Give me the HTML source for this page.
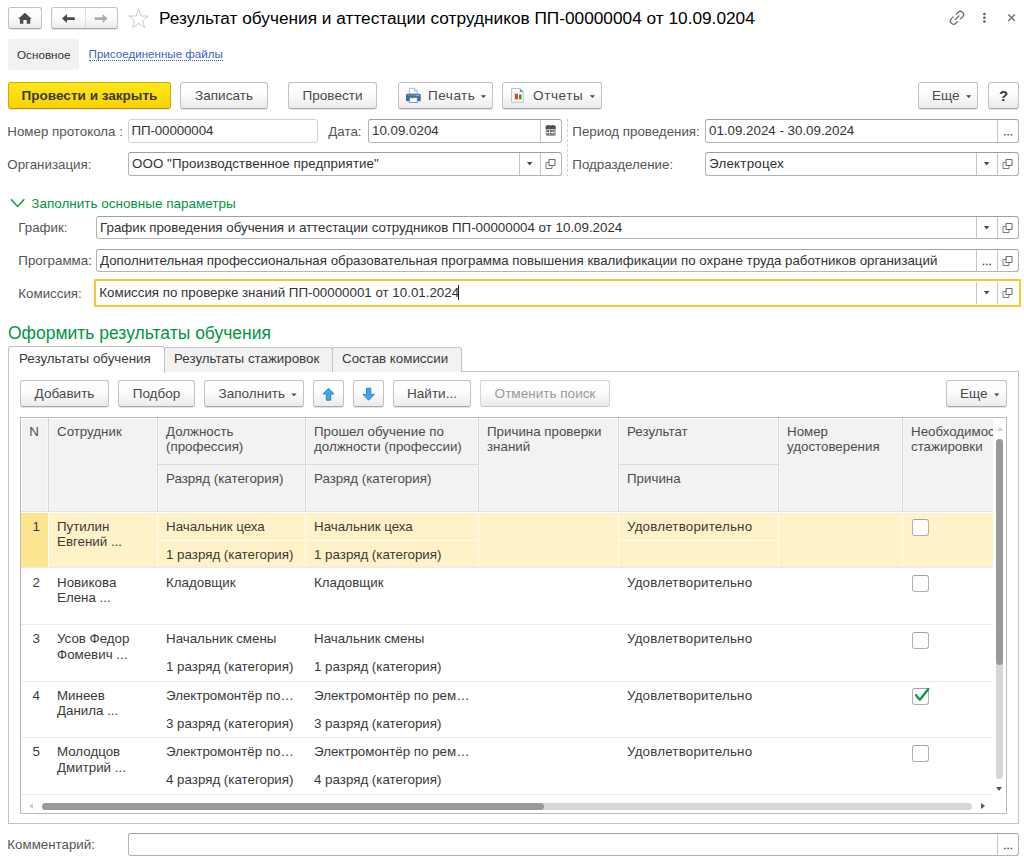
<!DOCTYPE html>
<html lang="ru">
<head>
<meta charset="utf-8">
<title>Результат обучения и аттестации сотрудников</title>
<style>
*{box-sizing:border-box}
html,body{margin:0;padding:0}
body{width:1024px;height:861px;overflow:hidden;background:#fff;position:relative;
 font-family:"Liberation Sans",sans-serif;font-size:13.333px;color:#333;line-height:15px}
.a{position:absolute;white-space:nowrap}
.btn{position:absolute;height:27px;top:82px;border:1px solid #c2c2c2;border-bottom-color:#a8a8a8;border-radius:3px;
 background:linear-gradient(#ffffff 0%,#fdfdfd 40%,#ebebeb 100%);box-shadow:0 1px 0 rgba(0,0,0,.10);
 text-align:center;line-height:25px;font-size:13.55px;color:#4a4a4a;white-space:nowrap}
.btn.y{background:linear-gradient(#ffe71f,#f8d200);border-color:#cfae00;border-bottom-color:#b79700;font-weight:bold;color:#3a3a3a}
.btn.dis{color:#9a9a9a;border-color:#d4d4d4;border-bottom-color:#c4c4c4;box-shadow:none}
.inp{position:absolute;height:23px;border:1px solid #b4b4b4;border-top-color:#9f9f9f;border-radius:3px;background:#fff;
 line-height:21px;padding-left:3px;color:#333;white-space:nowrap;overflow:hidden}
.lbl{position:absolute;margin:-0.5px 0 0 -0.7px;color:#555;white-space:nowrap;line-height:15px}
.sep{position:absolute;top:0;bottom:0;width:1px;background:#c8c8c8}
.green{color:#009646}
.tab{background:#f2f2f2;border:1px solid #c3c3c3;border-bottom:none;border-radius:3px 3px 0 0;padding:3px 0 0 9px;color:#3a3a3a}
.tab.act{background:#fff;padding:4px 0 0 10px}
.vl{width:1px;background:#d4d4d4;box-shadow:-1px 0 0 #f9f9f9,1px 0 0 #f9f9f9}
.hl{height:1px;background:#dcdcdc}
.th{color:#4d4d4d;line-height:15.2px}
.td{color:#3a3a3a;line-height:15.4px}
.cb{width:17px;height:17px;border:1px solid #b0b0b0;border-top-color:#a0a0a0;border-radius:3px;background:#fff}
.tri{position:absolute;width:0;height:0;border-left:3px solid transparent;border-right:3px solid transparent;border-top:4px solid #444}
</style>
</head>
<body>

<!-- top navigation -->
<div class="btn" style="left:8px;top:7px;width:34px;height:22px"></div>
<div class="btn" style="left:51px;top:7px;width:67px;height:22px"></div>
<div class="a" style="left:159px;top:7px;font-size:17.25px;line-height:22px;color:#000">Результат обучения и аттестации сотрудников ПП-00000004 от 10.09.0204</div>

<!-- sub tabs -->
<div class="a" style="left:8px;top:39px;width:71px;height:31px;background:#f2f2f2;border-radius:3px"></div>
<div class="a" style="left:17px;top:47px;font-size:11.7px;color:#333">Основное</div>
<div class="a" style="left:88.6px;top:47px;font-size:11.6px;color:#3a5fc8;border-bottom:1px dotted #3a5fc8;line-height:13px">Присоединенные файлы</div>

<!-- command bar -->
<div class="btn y" style="left:8px;width:163px">Провести и закрыть</div>
<div class="btn" style="left:180px;width:88px">Записать</div>
<div class="btn" style="left:288px;width:89px">Провести</div>
<div class="btn" style="left:398px;width:95px"><span class="a" style="left:29px;top:0;letter-spacing:0.5px">Печать</span></div>
<div class="btn" style="left:502px;width:100px"><span class="a" style="left:30px;top:0;letter-spacing:0.6px">Отчеты</span></div>
<div class="btn" style="left:918px;width:60px"><span class="a" style="left:13px;top:0">Еще</span></div>
<div class="btn" style="left:988px;width:31px;font-weight:bold;font-size:15px;color:#3a3a3a">?</div>

<!-- header fields -->
<div class="lbl" style="left:8px;top:124px">Номер протокола :</div>
<div class="inp" style="left:128px;top:119px;width:190px;height:24px;line-height:22px;border-color:#d2d2d2;letter-spacing:-0.1px;padding-left:2.5px">ПП-00000004</div>
<div class="lbl" style="left:329px;top:124px">Дата:</div>
<div class="inp" style="left:368px;top:119px;width:194px;height:24px;line-height:22px">10.09.0204</div>
<div class="lbl" style="left:573px;top:124px">Период проведения:</div>
<div class="inp" style="left:705px;top:119px;width:314px;height:24px;line-height:22px">01.09.2024 - 30.09.2024</div>

<div class="lbl" style="left:8px;top:157px">Организация:</div>
<div class="inp" style="left:128px;top:152px;width:434px;height:24px;line-height:22px;letter-spacing:0.08px">ООО "Производственное предприятие"</div>
<div class="lbl" style="left:573px;top:157px">Подразделение:</div>
<div class="inp" style="left:705px;top:152px;width:314px;height:24px;line-height:22px;letter-spacing:0.25px">Электроцех</div>

<!-- group -->
<div class="lbl green" style="left:32px;top:196.5px;font-size:13.5px">Заполнить основные параметры</div>
<div class="lbl" style="left:19px;top:220px">График:</div>
<div class="inp" style="left:96px;top:216px;width:923px">График проведения обучения и аттестации сотрудников ПП-00000004 от 10.09.2024</div>
<div class="lbl" style="left:19px;top:253px">Программа:</div>
<div class="inp" style="left:96px;top:249px;width:923px">Дополнительная профессиональная образовательная программа повышения квалификации по охране труда работников организаций</div>
<div class="lbl" style="left:19px;top:286px">Комиссия:</div>
<div class="inp" style="left:94px;top:279px;width:927px;height:28px;border:2px solid #fbc62f;border-radius:1px;line-height:24px;padding-left:3.3px">Комиссия по проверке знаний ПП-00000001 от 10.01.2024</div>

<div class="a green" style="left:8px;top:323px;font-size:17.5px;line-height:20px">Оформить результаты обучения</div>

<!-- tabs + panel -->
<div class="a" style="left:8px;top:371px;width:1011px;height:453px;border:1px solid #c3c3c3;background:#fff"></div>
<div class="a tab" style="left:164px;top:347px;width:169px;height:25px">Результаты стажировок</div>
<div class="a tab" style="left:332px;top:347px;width:130px;height:25px">Состав комиссии</div>
<div class="a tab act" style="left:8px;top:346px;width:157px;height:27px">Результаты обучения</div>

<!-- table command bar -->
<div class="btn" style="left:20px;top:380px;width:89px;line-height:26px">Добавить</div>
<div class="btn" style="left:118px;top:380px;width:77px;line-height:26px">Подбор</div>
<div class="btn" style="left:204px;top:380px;width:100px;line-height:26px"><span class="a" style="left:13.5px;top:0">Заполнить</span></div>
<div class="btn" style="left:313px;top:380px;width:31px;line-height:26px"></div>
<div class="btn" style="left:353px;top:380px;width:31px;line-height:26px"></div>
<div class="btn" style="left:393px;top:380px;width:78px;line-height:26px">Найти...</div>
<div class="btn dis" style="left:480px;top:380px;width:130px;line-height:26px">Отменить поиск</div>
<div class="btn" style="left:946px;top:380px;width:61px;line-height:26px"><span class="a" style="left:13px;top:0">Еще</span></div>

<!-- table -->
<div id="tbl" class="a" style="left:20px;top:417px;width:987px;height:397px;border:1px solid #b9b9b9;background:#fff;overflow:hidden">
<div class="a" style="left:-21px;top:-418px;width:1024px;height:861px">
<div class="a" style="left:22px;top:419px;width:971px;height:92px;background:#f2f2f2"></div>
<div class="a" style="left:21px;top:511px;width:972px;height:1px;background:#e2e2e2"></div>
<div class="a vl" style="left:48px;top:418px;height:93px"></div>
<div class="a vl" style="left:157px;top:418px;height:93px"></div>
<div class="a vl" style="left:305px;top:418px;height:93px"></div>
<div class="a vl" style="left:478px;top:418px;height:93px"></div>
<div class="a vl" style="left:618px;top:418px;height:93px"></div>
<div class="a vl" style="left:778px;top:418px;height:93px"></div>
<div class="a vl" style="left:902px;top:418px;height:93px"></div>
<div class="a hl" style="left:158px;top:464px;width:320px"></div>
<div class="a hl" style="left:619px;top:464px;width:159px"></div>
<div class="a th" style="left:29.2px;top:424px">N</div>
<div class="a th" style="left:57px;top:424px">Сотрудник</div>
<div class="a th" style="left:166px;top:424px">Должность<br>(профессия)</div>
<div class="a th" style="left:166px;top:471px">Разряд (категория)</div>
<div class="a th" style="left:314px;top:424px">Прошел обучение по<br>должности (профессии)</div>
<div class="a th" style="left:314px;top:471px">Разряд (категория)</div>
<div class="a th" style="left:487px;top:424px">Причина проверки<br>знаний</div>
<div class="a th" style="left:627px;top:424px">Результат</div>
<div class="a th" style="left:627px;top:471px">Причина</div>
<div class="a th" style="left:787px;top:424px">Номер<br>удостоверения</div>
<div class="a th" style="left:911px;top:424px;width:82px;overflow:hidden">Необходимость<br>стажировки</div>
<div class="a" style="left:21px;top:513px;width:27px;height:54px;background:#fde48e"></div>
<div class="a" style="left:49px;top:513px;width:944px;height:54px;background:#fff2c8"></div>
<div class="a" style="left:157px;top:513px;width:1px;height:54px;background:#fffbee"></div>
<div class="a" style="left:305px;top:513px;width:1px;height:54px;background:#fffbee"></div>
<div class="a" style="left:478px;top:513px;width:1px;height:54px;background:#fffbee"></div>
<div class="a" style="left:618px;top:513px;width:1px;height:54px;background:#fffbee"></div>
<div class="a" style="left:778px;top:513px;width:1px;height:54px;background:#fffbee"></div>
<div class="a" style="left:902px;top:513px;width:1px;height:54px;background:#fffbee"></div>
<div class="a" style="left:158px;top:540px;width:320px;height:1px;background:#fffbee"></div>
<div class="a" style="left:619px;top:540px;width:159px;height:1px;background:#fffbee"></div>
<div class="a" style="left:21px;top:567px;width:972px;height:1px;background:#ebebeb"></div>
<div class="a" style="left:21px;top:624px;width:972px;height:1px;background:#ebebeb"></div>
<div class="a" style="left:21px;top:681px;width:972px;height:1px;background:#ebebeb"></div>
<div class="a" style="left:21px;top:737px;width:972px;height:1px;background:#ebebeb"></div>
<div class="a" style="left:21px;top:794px;width:972px;height:1px;background:#ebebeb"></div>
<div class="a td" style="left:32.6px;top:518.8px">1</div>
<div class="a td" style="left:57px;top:518.8px">Путилин<br>Евгений ...</div>
<div class="a td" style="left:166px;top:518.8px">Начальник цеха</div>
<div class="a td" style="left:166px;top:546.9px">1 разряд (категория)</div>
<div class="a td" style="left:314px;top:518.8px">Начальник цеха</div>
<div class="a td" style="left:314px;top:546.9px">1 разряд (категория)</div>
<div class="a td" style="left:627px;top:518.8px;letter-spacing:0.2px">Удовлетворительно</div>
<div class="a cb" style="left:912px;top:519px"></div>
<div class="a td" style="left:32.6px;top:574.8px">2</div>
<div class="a td" style="left:57px;top:574.8px">Новикова<br>Елена ...</div>
<div class="a td" style="left:166px;top:574.8px">Кладовщик</div>
<div class="a td" style="left:314px;top:574.8px">Кладовщик</div>
<div class="a td" style="left:627px;top:574.8px;letter-spacing:0.2px">Удовлетворительно</div>
<div class="a cb" style="left:912px;top:575px"></div>
<div class="a td" style="left:32.6px;top:631.3px">3</div>
<div class="a td" style="left:57px;top:631.3px">Усов Федор<br>Фомевич ...</div>
<div class="a td" style="left:166px;top:631.3px">Начальник смены</div>
<div class="a td" style="left:166px;top:659.4px">1 разряд (категория)</div>
<div class="a td" style="left:314px;top:631.3px">Начальник смены</div>
<div class="a td" style="left:314px;top:659.4px">1 разряд (категория)</div>
<div class="a td" style="left:627px;top:631.3px;letter-spacing:0.2px">Удовлетворительно</div>
<div class="a cb" style="left:912px;top:631.5px"></div>
<div class="a td" style="left:32.6px;top:687.8px">4</div>
<div class="a td" style="left:57px;top:687.8px">Минеев<br>Данила ...</div>
<div class="a td" style="left:166px;top:687.8px">Электромонтёр по…</div>
<div class="a td" style="left:166px;top:715.9px">3 разряд (категория)</div>
<div class="a td" style="left:314px;top:687.8px">Электромонтёр по рем…</div>
<div class="a td" style="left:314px;top:715.9px">3 разряд (категория)</div>
<div class="a td" style="left:627px;top:687.8px;letter-spacing:0.2px">Удовлетворительно</div>
<div class="a cb" style="left:912px;top:688px"><svg width="22" height="22" viewBox="0 0 22 22" style="position:absolute;left:-1px;top:-4px"><path d="M4.0 10.2 L7.9 14.7 L16.3 3.9" fill="none" stroke="#0b9a48" stroke-width="2.4" stroke-linecap="round" stroke-linejoin="round"/></svg></div>
<div class="a td" style="left:32.6px;top:744.3px">5</div>
<div class="a td" style="left:57px;top:744.3px">Молодцов<br>Дмитрий ...</div>
<div class="a td" style="left:166px;top:744.3px">Электромонтёр по…</div>
<div class="a td" style="left:166px;top:772.4px">4 разряд (категория)</div>
<div class="a td" style="left:314px;top:744.3px">Электромонтёр по рем…</div>
<div class="a td" style="left:314px;top:772.4px">4 разряд (категория)</div>
<div class="a td" style="left:627px;top:744.3px;letter-spacing:0.2px">Удовлетворительно</div>
<div class="a cb" style="left:912px;top:744.5px"></div>
<div class="a" style="left:993px;top:418px;width:13px;height:395px;background:#fff"></div>
<div class="a" style="left:996px;top:439px;width:7px;height:340px;border-radius:4px;background:#d6d6d6"></div>
<div class="a" style="left:996px;top:439px;width:7px;height:226px;border-radius:4px;background:#999"></div>
<div class="a" style="left:996.5px;top:427px;border-left:3px solid transparent;border-right:3px solid transparent;border-bottom:4px solid #d0d0d0;width:0;height:0"></div>
<div class="a" style="left:996px;top:787px;border-left:3.5px solid transparent;border-right:3.5px solid transparent;border-top:4px solid #555;width:0;height:0"></div>
<div class="a" style="left:21px;top:795px;width:985px;height:18px;background:#fff"></div>
<div class="a" style="left:42px;top:803px;width:930px;height:7px;border-radius:4px;background:#d6d6d6"></div>
<div class="a" style="left:42px;top:803px;width:502px;height:7px;border-radius:4px;background:#999"></div>
<div class="a" style="left:29px;top:803px;border-top:3px solid transparent;border-bottom:3px solid transparent;border-right:4px solid #d0d0d0;width:0;height:0"></div>
<div class="a" style="left:981px;top:803px;border-top:3.5px solid transparent;border-bottom:3.5px solid transparent;border-left:4px solid #555;width:0;height:0"></div>
</div></div>

<div class="lbl" style="left:8px;top:837px">Комментарий:</div>
<div class="inp" style="left:128px;top:833px;width:891px"></div>

<!-- icons layer -->
<svg class="a" style="left:0;top:0;pointer-events:none" width="1024" height="861" viewBox="0 0 1024 861">
 <!-- home -->
 <path d="M24.9 12.7 L31.8 18.9 L30.2 18.9 L30.2 23.7 L26.7 23.7 L26.7 20 L23.4 20 L23.4 23.7 L19.9 23.7 L19.9 18.9 L18.1 18.9 Z" fill="#4a4a4a"/>
 <!-- back / forward -->
 <line x1="85.5" y1="8" x2="85.5" y2="28" stroke="#dcdcdc" stroke-width="1"/>
 <path d="M62 18.5 L67 14 L67 17.2 L74.8 17.2 L74.8 19.9 L67 19.9 L67 23.1 Z" fill="#4a4a4a"/>
 <path d="M107.6 18.5 L102.6 14 L102.6 17.2 L94.8 17.2 L94.8 19.9 L102.6 19.9 L102.6 23.1 Z" fill="#ababab"/>
 <!-- star -->
 <polygon points="138.6,9.0 141.0,16.0 148.4,16.1 142.5,20.6 144.7,27.6 138.6,23.4 132.5,27.6 134.7,20.6 128.8,16.1 136.2,16.0" fill="none" stroke="#c3cad1" stroke-width="1"/>
 <!-- link -->
 <g fill="none" stroke="#6e6e6e" stroke-width="1.3" stroke-linecap="round" transform="rotate(-43 957 17.8)">
  <path d="M959.1 14.6 H961.65 a3.2 3.2 0 0 1 0 6.4 H959.1"/>
  <path d="M954.9 14.6 H952.35 a3.2 3.2 0 0 0 0 6.4 H954.9"/>
  <path d="M954.4 17.8 H959.6"/>
 </g>
 <!-- dots -->
 <circle cx="984.4" cy="14" r="1.3" fill="#5a5a5a"/><circle cx="984.4" cy="17.8" r="1.3" fill="#5a5a5a"/><circle cx="984.4" cy="21.5" r="1.3" fill="#5a5a5a"/>
 <!-- close -->
 <path d="M1008.3 14.5 L1014.9 21.1 M1014.9 14.5 L1008.3 21.1" stroke="#707070" stroke-width="1.4" fill="none"/>
 <!-- printer -->
 <path d="M409.3 94 V88.3 H414.6 L417.2 90.9 V94 Z" fill="#fff" stroke="#9fb3cd" stroke-width="0.9"/>
 <path d="M414.4 88.4 V91.1 H417.1" fill="none" stroke="#9fb3cd" stroke-width="0.9"/>
 <rect x="406" y="93.8" width="14.7" height="7.4" rx="1.3" fill="#44699a"/>
 <rect x="406.6" y="94.3" width="13.5" height="1.6" rx="0.8" fill="#5d84b6"/>
 <rect x="416.3" y="95.2" width="2.8" height="0.9" fill="#9db8d8"/>
 <rect x="409.5" y="97.8" width="7.7" height="4.8" fill="#fff" stroke="#6b8db8" stroke-width="0.8"/>
 <!-- report -->
 <path d="M511.6 88.5 H519.8 L523.2 91.9 V102.3 H511.6 Z" fill="#fff" stroke="#b3c0cd" stroke-width="1" stroke-linejoin="round"/>
 <path d="M519.8 88.3 L523.4 91.9 H519.8 Z" fill="#7d92a8"/>
 <rect x="513.7" y="92" width="0.8" height="7.4" fill="#d0d0d0"/>
 <rect x="513.7" y="99" width="8" height="0.7" fill="#e0d0d0"/>
 <rect x="515" y="93.7" width="3" height="5.4" fill="#ee3a25"/>
 <rect x="519" y="94.6" width="2.5" height="4.5" fill="#2d9a12"/>
 <!-- button dropdown triangles -->
 <path d="M480.7 95.3 h5.4 l-2.7 2.8 Z M589.7 95.3 h5.4 l-2.7 2.8 Z M966 95.3 h5.4 l-2.7 2.8 Z M291.3 393.4 h5.4 l-2.7 2.8 Z M994 393.4 h5.4 l-2.7 2.8 Z" fill="#4a4a4a"/>
 <!-- chevron -->
 <path d="M11 199.2 L17.6 206.4 L24.3 199.2" fill="none" stroke="#159a49" stroke-width="1.5"/>
 <!-- dotted separator -->
 <line x1="567.5" y1="119" x2="567.5" y2="176" stroke="#d2d2d2" stroke-width="1" stroke-dasharray="3 2"/>
 <!-- input buttons -->
 <rect x="540" y="120" width="1" height="22" fill="#c6c6c6"/>
 <rect x="997" y="120" width="1" height="22" fill="#c6c6c6"/>
 <rect x="519" y="153" width="1" height="22" fill="#c6c6c6"/>
 <rect x="540" y="153" width="1" height="22" fill="#c6c6c6"/>
 <rect x="976" y="153" width="1" height="22" fill="#c6c6c6"/>
 <rect x="997" y="153" width="1" height="22" fill="#c6c6c6"/>
 <rect x="976" y="217" width="1" height="21" fill="#c6c6c6"/>
 <rect x="997" y="217" width="1" height="21" fill="#c6c6c6"/>
 <rect x="976" y="250" width="1" height="21" fill="#c6c6c6"/>
 <rect x="997" y="250" width="1" height="21" fill="#c6c6c6"/>
 <rect x="997" y="834" width="1" height="21" fill="#c6c6c6"/>
 <rect x="976" y="282" width="1" height="22" fill="#c6c6c6"/><rect x="997" y="282" width="1" height="22" fill="#c6c6c6"/>
 <rect x="545.7" y="125.6" width="10" height="10.4" rx="1.4" fill="#9e9e9e"/><path d="M545.7 129 V127 a1.4 1.4 0 0 1 1.4 -1.4 H554.3000000000001 a1.4 1.4 0 0 1 1.4 1.4 V129 Z" fill="#505050"/><rect x="547.7" y="125" width="1.6" height="1.6" rx="0.5" fill="#505050"/><rect x="552.1" y="125" width="1.6" height="1.6" rx="0.5" fill="#505050"/><rect x="547.3000000000001" y="130.2" width="1.7" height="1.7" fill="#5c5c5c"/><rect x="550.0" y="130.2" width="1.7" height="1.7" fill="#5c5c5c"/><rect x="552.7" y="130.2" width="1.7" height="1.7" fill="#777"/><rect x="547.3000000000001" y="133" width="1.7" height="1.6" fill="#5c5c5c"/><rect x="550.0" y="133" width="1.7" height="1.6" fill="#5c5c5c"/><rect x="552.7" y="133" width="1.7" height="1.6" fill="#777"/><rect x="546.7" y="132" width="8" height="0.9" fill="#f4f4f4"/><rect x="549.1" y="129.6" width="0.8" height="5.6" fill="#e8e8e8"/><rect x="546.9000000000001" y="129.2" width="7.6" height="0.7" fill="#d8d8d8"/>
 <rect x="1004.1" y="134.0" width="1.5" height="1.5" fill="#4a4a4a"/><rect x="1007.4" y="134.0" width="1.5" height="1.5" fill="#4a4a4a"/><rect x="1010.7" y="134.0" width="1.5" height="1.5" fill="#4a4a4a"/>
 <path d="M526.9000000000001 162.0 h5.6 l-2.8 3.4 Z" fill="#4a4a4a"/>
 <path d="M549.0 162.5 H546.0 V168.5 H552.0 V165.5" fill="none" stroke="#7a7a7a" stroke-width="1" stroke-linejoin="round"/><rect x="549.0" y="159.5" width="6" height="6" rx="0.4" fill="#fff" stroke="#6e6e6e" stroke-width="1.1"/>
 <path d="M983.9000000000001 162.0 h5.6 l-2.8 3.4 Z" fill="#4a4a4a"/>
 <path d="M1006.0 162.5 H1003.0 V168.5 H1009.0 V165.5" fill="none" stroke="#7a7a7a" stroke-width="1" stroke-linejoin="round"/><rect x="1006.0" y="159.5" width="6" height="6" rx="0.4" fill="#fff" stroke="#6e6e6e" stroke-width="1.1"/>
 <path d="M983.9000000000001 226.0 h5.6 l-2.8 3.4 Z" fill="#4a4a4a"/>
 <path d="M1006.0 226.5 H1003.0 V232.5 H1009.0 V229.5" fill="none" stroke="#7a7a7a" stroke-width="1" stroke-linejoin="round"/><rect x="1006.0" y="223.5" width="6" height="6" rx="0.4" fill="#fff" stroke="#6e6e6e" stroke-width="1.1"/>
 <rect x="982.8" y="263.7" width="1.5" height="1.5" fill="#4a4a4a"/><rect x="986.1" y="263.7" width="1.5" height="1.5" fill="#4a4a4a"/><rect x="989.4" y="263.7" width="1.5" height="1.5" fill="#4a4a4a"/>
 <path d="M1006.0 259.5 H1003.0 V265.5 H1009.0 V262.5" fill="none" stroke="#7a7a7a" stroke-width="1" stroke-linejoin="round"/><rect x="1006.0" y="256.5" width="6" height="6" rx="0.4" fill="#fff" stroke="#6e6e6e" stroke-width="1.1"/>
 <path d="M983.9000000000001 291.0 h5.6 l-2.8 3.4 Z" fill="#4a4a4a"/>
 <path d="M1006.0 291.5 H1003.0 V297.5 H1009.0 V294.5" fill="none" stroke="#7a7a7a" stroke-width="1" stroke-linejoin="round"/><rect x="1006.0" y="288.5" width="6" height="6" rx="0.4" fill="#fff" stroke="#6e6e6e" stroke-width="1.1"/>
 <rect x="1004.1" y="847.7" width="1.5" height="1.5" fill="#4a4a4a"/><rect x="1007.4" y="847.7" width="1.5" height="1.5" fill="#4a4a4a"/><rect x="1010.7" y="847.7" width="1.5" height="1.5" fill="#4a4a4a"/>
 <rect x="458" y="285" width="1" height="15" fill="#222"/>
 <!-- up / down arrows -->
 <path d="M328.5 388.2 L334 394 L330.7 394 L330.7 400.2 L326.4 400.2 L326.4 394 L323 394 Z" fill="#3ea6ea" stroke="#217fc6" stroke-width="0.9" stroke-linejoin="round"/>
 <path d="M368.6 400.3 L374.2 394.4 L370.8 394.4 L370.8 388.2 L366.5 388.2 L366.5 394.4 L363 394.4 Z" fill="#3ea6ea" stroke="#217fc6" stroke-width="0.9" stroke-linejoin="round"/>
</svg>

</body>
</html>
